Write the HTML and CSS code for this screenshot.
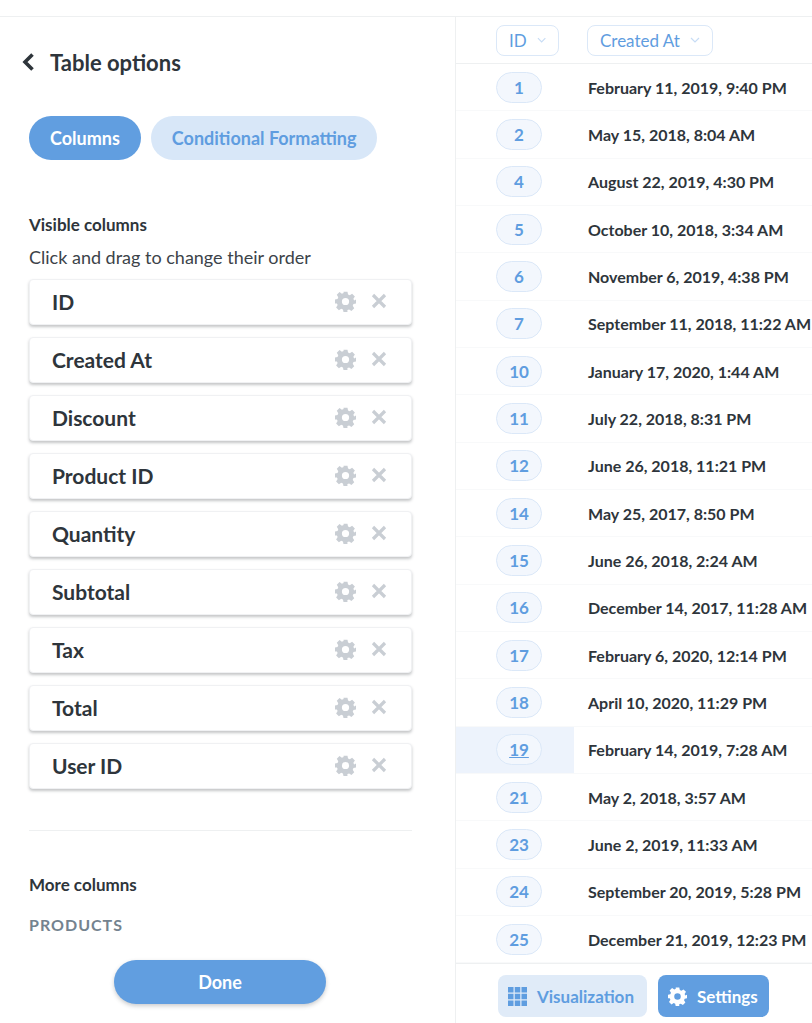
FILE: index.html
```html
<!DOCTYPE html>
<html lang="en">
<head>
<meta charset="utf-8">
<title>Table options</title>
<link rel="stylesheet" href="styles.css">
</head>
<body>
<svg class="defs" width="0" height="0" aria-hidden="true">
  <defs>
    <symbol id="gear" viewBox="0 0 32 32">
      <path fill-rule="evenodd" d="M13 1h6l.9 4.2 2.6 1.1 3.6-2.3 4.2 4.2-2.3 3.6 1.1 2.6L32.300 13v6l-4.200.9-1.100 2.600 2.300 3.600-4.200 4.200-3.600-2.300-2.600 1.100L19 32.300h-6l-.9-4.200-2.600-1.100-3.600 2.300-4.200-4.200 2.300-3.600-1.100-2.600L-.3 19v-6l4.200-.9 1.100-2.600-2.300-3.600 4.200-4.200 3.600 2.300 2.600-1.100zM16 10.500a5.500 5.500 0 1 0 0 11 5.500 5.500 0 0 0 0-11z"/>
    </symbol>
    <symbol id="close" viewBox="0 0 16 16">
      <path d="M2 2l12 12M14 2L2 14" fill="none" stroke="currentColor" stroke-width="3.200"/>
    </symbol>
    <symbol id="chev" viewBox="0 0 10 6">
      <path d="M1 1l4 4 4-4" fill="none" stroke="currentColor" stroke-width="1.200"/>
    </symbol>
  </defs>
</svg>
<div class="page">
  <aside class="side">
    <div class="title-row">
      <svg class="back" viewBox="0 0 14 20"><path d="M11.500 2.500L4 10l7.500 7.500" fill="none" stroke="currentColor" stroke-width="3.600"/></svg>
      <h1 class="title">Table options</h1>
    </div>
    <div class="tabs">
      <button class="tab tab-on">Columns</button>
      <button class="tab tab-off">Conditional Formatting</button>
    </div>
    <h2 class="sec-head">Visible columns</h2>
    <p class="hint">Click and drag to change their order</p>
    <ul class="cols">
      <li class="col"><span class="col-name">ID</span><svg class="ic-gear"><use href="#gear"/></svg><svg class="ic-x"><use href="#close"/></svg></li>
      <li class="col"><span class="col-name">Created At</span><svg class="ic-gear"><use href="#gear"/></svg><svg class="ic-x"><use href="#close"/></svg></li>
      <li class="col"><span class="col-name">Discount</span><svg class="ic-gear"><use href="#gear"/></svg><svg class="ic-x"><use href="#close"/></svg></li>
      <li class="col"><span class="col-name">Product ID</span><svg class="ic-gear"><use href="#gear"/></svg><svg class="ic-x"><use href="#close"/></svg></li>
      <li class="col"><span class="col-name">Quantity</span><svg class="ic-gear"><use href="#gear"/></svg><svg class="ic-x"><use href="#close"/></svg></li>
      <li class="col"><span class="col-name">Subtotal</span><svg class="ic-gear"><use href="#gear"/></svg><svg class="ic-x"><use href="#close"/></svg></li>
      <li class="col"><span class="col-name">Tax</span><svg class="ic-gear"><use href="#gear"/></svg><svg class="ic-x"><use href="#close"/></svg></li>
      <li class="col"><span class="col-name">Total</span><svg class="ic-gear"><use href="#gear"/></svg><svg class="ic-x"><use href="#close"/></svg></li>
      <li class="col"><span class="col-name">User ID</span><svg class="ic-gear"><use href="#gear"/></svg><svg class="ic-x"><use href="#close"/></svg></li>
    </ul>
    <hr class="rule">
    <h2 class="sec-head more">More columns</h2>
    <div class="group">PRODUCTS</div>
    <button class="done">Done</button>
  </aside>
  <main class="data">
    <div class="thead">
      <div class="c-id"><span class="th th-id">ID<svg class="chev"><use href="#chev"/></svg></span></div>
      <div class="c-date"><span class="th">Created At<svg class="chev"><use href="#chev"/></svg></span></div>
    </div>
    <div class="tbody">
      <div class="tr"><div class="c-id"><span class="pill">1</span></div><div class="c-date">February 11, 2019, 9:40 PM</div></div>
      <div class="tr"><div class="c-id"><span class="pill">2</span></div><div class="c-date">May 15, 2018, 8:04 AM</div></div>
      <div class="tr"><div class="c-id"><span class="pill">4</span></div><div class="c-date">August 22, 2019, 4:30 PM</div></div>
      <div class="tr"><div class="c-id"><span class="pill">5</span></div><div class="c-date">October 10, 2018, 3:34 AM</div></div>
      <div class="tr"><div class="c-id"><span class="pill">6</span></div><div class="c-date">November 6, 2019, 4:38 PM</div></div>
      <div class="tr"><div class="c-id"><span class="pill">7</span></div><div class="c-date">September 11, 2018, 11:22 AM</div></div>
      <div class="tr"><div class="c-id"><span class="pill">10</span></div><div class="c-date">January 17, 2020, 1:44 AM</div></div>
      <div class="tr"><div class="c-id"><span class="pill">11</span></div><div class="c-date">July 22, 2018, 8:31 PM</div></div>
      <div class="tr"><div class="c-id"><span class="pill">12</span></div><div class="c-date">June 26, 2018, 11:21 PM</div></div>
      <div class="tr"><div class="c-id"><span class="pill">14</span></div><div class="c-date">May 25, 2017, 8:50 PM</div></div>
      <div class="tr"><div class="c-id"><span class="pill">15</span></div><div class="c-date">June 26, 2018, 2:24 AM</div></div>
      <div class="tr"><div class="c-id"><span class="pill">16</span></div><div class="c-date">December 14, 2017, 11:28 AM</div></div>
      <div class="tr"><div class="c-id"><span class="pill">17</span></div><div class="c-date">February 6, 2020, 12:14 PM</div></div>
      <div class="tr"><div class="c-id"><span class="pill">18</span></div><div class="c-date">April 10, 2020, 11:29 PM</div></div>
      <div class="tr"><div class="c-id c-hover"><span class="pill pill-hover">19</span></div><div class="c-date">February 14, 2019, 7:28 AM</div></div>
      <div class="tr"><div class="c-id"><span class="pill">21</span></div><div class="c-date">May 2, 2018, 3:57 AM</div></div>
      <div class="tr"><div class="c-id"><span class="pill">23</span></div><div class="c-date">June 2, 2019, 11:33 AM</div></div>
      <div class="tr"><div class="c-id"><span class="pill">24</span></div><div class="c-date">September 20, 2019, 5:28 PM</div></div>
      <div class="tr"><div class="c-id"><span class="pill">25</span></div><div class="c-date">December 21, 2019, 12:23 PM</div></div>
    </div>
    <div class="foot">
      <button class="fbtn fbtn-viz">
        <svg class="ic-grid" viewBox="0 0 19 19"><path d="M0 0h5.500v5.500H0zM6.750 0h5.500v5.500h-5.500zM13.500 0H19v5.500h-5.500zM0 6.750h5.500v5.500H0zM6.750 6.750h5.500v5.500h-5.500zM13.500 6.750H19v5.500h-5.500zM0 13.500h5.500V19H0zM6.750 13.500h5.500V19h-5.500zM13.500 13.500H19V19h-5.500z"/></svg>
        Visualization
      </button>
      <button class="fbtn fbtn-set"><svg class="ic-set"><use href="#gear"/></svg>Settings</button>
    </div>
  </main>
</div>
</body>
</html>
```

FILE: styles.css
```css
* { box-sizing: border-box; }
html, body { margin: 0; padding: 0; }
body {
  background: #fff;
  font-family: Lato, "Liberation Sans", sans-serif;
  color: #2e353b;
  overflow: hidden;
}
.defs { position: absolute; }
button { font-family: inherit; border: 0; cursor: pointer; }
.page {
  display: flex;
  height: 1023px;
  margin-top: 16px;
  border-top: 1px solid #eef0f1;
}
.side {
  width: 456px;
  flex: none;
  border-right: 1px solid #eef0f1;
  padding: 0 43px 0 29px;
  height: 1006px;
}
.title-row {
  display: flex;
  align-items: center;
  height: 26px;
  margin-top: 32px;
  margin-left: -8px;
}
.back { width: 14px; height: 20px; color: #2e353b; margin-right: 15px; }
.title { margin: 0; font-size: 22px; font-weight: 700; color: #2e353b; }
.tabs { display: flex; gap: 10px; margin-top: 41px; }
.tab {
  height: 44px;
  border-radius: 22px;
  font-size: 18px;
  font-weight: 700;
  padding: 0 21px;
}
.tab-on { background: #619ee0; color: #fff; }
.tab-off { background: #d8e7f8; color: #5f9de0; }
.sec-head { margin: 0; font-size: 17px; font-weight: 700; line-height: 22px; color: #2e353b; }
.tabs + .sec-head { margin-top: 54px; }
.hint { margin: 10px 0 0; font-size: 18px; line-height: 22px; color: #3c4349; }
.cols { list-style: none; margin: 11px 0 0; padding: 0; display: flex; flex-direction: column; gap: 12px; }
.col {
  display: flex;
  align-items: center;
  height: 46px;
  padding: 0 24px 2px 22px;
  background: #fff;
  border: 1px solid #f0f1f3;
  border-radius: 4px;
  box-shadow: 0 2px 3px rgba(46, 53, 59, .28);
}
.col-name { flex: 1; font-size: 21px; font-weight: 700; color: #2e353b; }
.ic-gear { width: 21px; height: 21px; fill: #c9ced4; }
.ic-x { width: 16px; height: 16px; color: #c9ced4; margin-left: 15px; }
.rule { border: 0; border-top: 1px solid #eef0f1; margin: 41px 0 0; }
.more { margin-top: 43px; }
.group { margin-top: 19px; font-size: 16px; font-weight: 700; letter-spacing: 1px; line-height: 20px; color: #74838f; }
.done {
  display: block;
  width: 212px;
  height: 44px;
  margin: 25px 0 0 85px;
  border-radius: 22px;
  background: #619ee0;
  color: #fff;
  font-size: 18px;
  font-weight: 700;
  box-shadow: 0 2px 4px rgba(46, 53, 59, .25);
}
.data { flex: 1; min-width: 0; height: 1006px; display: flex; flex-direction: column; }
.thead, .tr { display: flex; }
.thead { height: 47px; align-items: center; border-bottom: 1px solid #eef0f1; }
.c-id { width: 118px; flex: none; padding-left: 40px; }
.c-date { flex: none; white-space: nowrap; font-size: 16px; font-weight: 700; padding-left: 14px; color: #2e353b; }
.thead .c-date { padding-left: 13px; }
.th {
  display: inline-flex;
  align-items: center;
  height: 31px;
  padding: 0 12px;
  border: 1px solid #dbe8f8;
  border-radius: 8px;
  font-size: 17px;
  font-weight: 400;
  color: #5f9de0;
}
.th-id { width: 63px; }
.chev { width: 10px; height: 6px; margin-left: 10px; color: #c7dcf5; }
.tbody { flex: 1; min-height: 0; overflow: hidden; }
.tr { height: 47.33px; align-items: center; border-bottom: 1px solid #f8f9fa; }
.tr .c-id { height: 100%; display: flex; align-items: center; }
.c-hover { background: #edf3fc; }
.pill {
  display: block;
  width: 46px;
  height: 31px;
  line-height: 29px;
  text-align: center;
  border: 1px solid #dbe8f8;
  border-radius: 16px;
  background: #f3f7fd;
  color: #5f9de0;
  font-size: 17px;
  font-weight: 700;
}
.pill-hover { text-decoration: underline; }
.foot {
  height: 60px;
  flex: none;
  display: flex;
  gap: 11px;
  align-items: flex-start;
  padding: 11px 0 0 42px;
  border-top: 1px solid #eef0f1;
}
.fbtn {
  display: flex;
  align-items: center;
  height: 42px;
  border-radius: 8px;
  font-size: 17px;
  font-weight: 700;
  white-space: nowrap;
}
.fbtn-viz { width: 149px; padding: 0 0 0 10px; background: #e0ebf8; color: #5f9de0; }
.fbtn-set { width: 111px; padding: 0 0 0 10px; background: #619ee0; color: #fff; }
.ic-grid { width: 19px; height: 19px; fill: #5f9de0; margin-right: 10px; }
.ic-set { width: 19px; height: 19px; fill: #fff; margin-right: 10px; }
```
